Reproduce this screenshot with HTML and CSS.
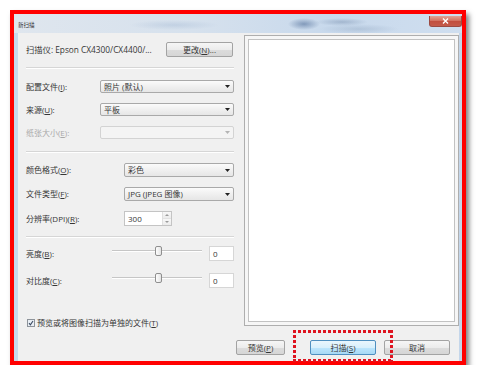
FILE: index.html
```html
<!DOCTYPE html>
<html lang="zh-CN">
<head>
<meta charset="utf-8">
<title>新扫描</title>
<link rel="stylesheet" href="styles.css">
</head>
<body>
<div class="frame">
  <div class="window">
    <div class="titlebar">
      <span class="title">新扫描</span>
      <div class="close">
        <svg width="7" height="6" viewBox="0 0 7 6"><path d="M1 0.5 L6 5.5 M6 0.5 L1 5.5" stroke="#fff" stroke-width="1.4" fill="none"/></svg>
      </div>
    </div>
    <div class="body">
      <div class="main">
        <div class="left">
          <div class="scanner-row">
            <span class="txt">扫描仪: Epson CX4300/CX4400/...</span>
            <div class="btn change">更改(<u>N</u>)...</div>
          </div>
          <div class="sep sep1"></div>
          <div class="grid group1">
            <span class="lbl">配置文件(<u>I</u>):</span>
            <div class="combo"><span>照片 (默认)</span><svg class="arr" width="5" height="3" viewBox="0 0 5 3"><path d="M0 0H5L2.5 3Z" fill="#222"/></svg></div>
            <span class="lbl">来源(<u>U</u>):</span>
            <div class="combo"><span>平板</span><svg class="arr" width="5" height="3" viewBox="0 0 5 3"><path d="M0 0H5L2.5 3Z" fill="#222"/></svg></div>
            <span class="lbl dis">纸张大小(<u>E</u>):</span>
            <div class="combo disabled"><span></span><svg class="arr" width="5" height="3" viewBox="0 0 5 3"><path d="M0 0H5L2.5 3Z" fill="#b4b4b4"/></svg></div>
          </div>
          <div class="sep sep2"></div>
          <div class="grid group2">
            <span class="lbl">颜色格式(<u>O</u>):</span>
            <div class="combo"><span>彩色</span><svg class="arr" width="5" height="3" viewBox="0 0 5 3"><path d="M0 0H5L2.5 3Z" fill="#222"/></svg></div>
            <span class="lbl">文件类型(<u>F</u>):</span>
            <div class="combo"><span>JPG (JPEG 图像)</span><svg class="arr" width="5" height="3" viewBox="0 0 5 3"><path d="M0 0H5L2.5 3Z" fill="#222"/></svg></div>
            <span class="lbl">分辨率(DPI)(<u>R</u>):</span>
            <div class="spin">
              <span class="spin-val">300</span>
              <div class="spin-btns">
                <div class="sb"><svg width="4" height="2" viewBox="0 0 4 2"><path d="M0 2H4L2 0Z" fill="#9a9a9a"/></svg></div>
                <div class="sb"><svg width="4" height="2" viewBox="0 0 4 2"><path d="M0 0H4L2 2Z" fill="#9a9a9a"/></svg></div>
              </div>
            </div>
          </div>
          <div class="sep sep3"></div>
          <div class="grid group3">
            <span class="lbl">亮度(<u>B</u>):</span>
            <div class="slider"><div class="track"></div><div class="thumb"></div></div>
            <div class="valbox">0</div>
            <span class="lbl">对比度(<u>C</u>):</span>
            <div class="slider"><div class="track"></div><div class="thumb"></div></div>
            <div class="valbox">0</div>
          </div>
          <div class="check-row">
            <svg class="cb" width="8" height="8" viewBox="0 0 8 8"><rect x="0.5" y="0.5" width="7" height="7" fill="#e9eef4" stroke="#8d939a"/><path d="M2 4.2 L3.4 5.8 L6 2" stroke="#3a4a62" stroke-width="1.1" fill="none"/></svg>
            <span class="txt">预览或将图像扫描为单独的文件(<u>T</u>)</span>
          </div>
        </div>
        <div class="preview"><div class="preview-inner"></div></div>
      </div>
      <div class="actions">
        <div class="btn b-preview">预览(<u>P</u>)</div>
        <div class="btn b-scan default">扫描(<u>S</u>)</div>
        <div class="btn b-cancel">取消</div>
      </div>
    </div>
  </div>
  <div class="focus-mark"></div>
</div>
</body>
</html>
```

FILE: styles.css
```css
* { box-sizing: border-box; }

body {
  margin: 0;
  padding: 10px 0 0 10px;
  background: #ffffff;
  font-family: "Open Sans", "Noto Sans CJK SC", sans-serif;
  color: #363636;
}

u { text-decoration: underline; text-underline-offset: 1px; text-decoration-thickness: 0.5px; }

.frame {
  position: relative;
  width: 456px;
  height: 355px;
  border: 4px solid #ff0000;
  box-shadow: 3px 4px 5px rgba(0, 0, 0, 0.5);
}

.window {
  display: flex;
  flex-direction: column;
  height: 100%;
  background: linear-gradient(90deg, #c6d8ec, #cddcee 50%, #c4d6ea);
}

.titlebar {
  height: 19px;
  display: flex;
  align-items: flex-start;
  background:
    radial-gradient(ellipse 16px 6px at 290px 10px, rgba(70, 100, 145, 0.55), rgba(70, 100, 145, 0)),
    radial-gradient(ellipse 26px 4px at 328px 8px, rgba(90, 115, 150, 0.35), rgba(90, 115, 150, 0)),
    radial-gradient(ellipse 40px 5px at 345px 15px, rgba(110, 135, 165, 0.25), rgba(110, 135, 165, 0)),
    radial-gradient(ellipse 45px 5px at 160px 11px, rgba(120, 150, 190, 0.22), rgba(120, 150, 190, 0)),
    linear-gradient(90deg, #dfe6ee, #d6e1ed 40%, #c8d9ec 70%, #cfdeef);
}

.title {
  font-size: 5.5px;
  line-height: 6px;
  margin: 8px 0 0 4px;
  color: #2a2a2a;
}

.close {
  margin-left: auto;
  margin-top: 2px;
  width: 33px;
  height: 11px;
  border: 1px solid #9c4a42;
  border-top: none;
  border-radius: 0 0 3px 3px;
  background: linear-gradient(#e3a295, #d27463 45%, #c24f3f 55%, #c45b4b);
  display: flex;
  align-items: center;
  justify-content: center;
}

.body {
  flex: 1;
  display: flex;
  flex-direction: column;
  background: #f0f0f0;
  margin: 0 3px 0 4px;
}

.main {
  height: 299px;
  display: flex;
}

.left {
  width: 222px;
  padding: 0 6px 0 8px;
  display: flex;
  flex-direction: column;
  font-size: 8px;
}

.txt, .lbl { font-size: 8px; line-height: 10px; white-space: nowrap; }
.scanner-row .txt { font-size: 8.3px; }
.lbl.dis { color: #a9a9a9; }

.scanner-row {
  margin-top: 9px;
  height: 15px;
  display: flex;
  align-items: center;
  justify-content: space-between;
}

.btn {
  height: 15px;
  border: 1px solid #a3a3a3;
  border-radius: 2px;
  background: linear-gradient(#f6f6f6, #ececec 50%, #dcdcdc 51%, #d6d6d6);
  font-size: 8px;
  line-height: 13px;
  text-align: center;
  color: #363636;
  white-space: nowrap;
}

.change { width: 67px; margin-right: 1px; }

.sep {
  height: 2px;
  border-top: 1px solid #d6d6d6;
  border-bottom: 1px solid #ffffff;
}
.sep1 { margin-top: 10px; }
.sep2 { margin-top: 12px; }
.sep3 { margin-top: 10px; }

.grid {
  display: grid;
  align-items: center;
}

.group1 {
  margin-top: 11px;
  grid-template-columns: 74px 1fr;
  grid-auto-rows: 13px;
  row-gap: 10px;
}

.group2 {
  margin-top: 10px;
  grid-template-columns: 98px 1fr;
  grid-template-rows: 14px 14px 15px;
  row-gap: 10px;
}

.group3 {
  margin-top: 8px;
  grid-template-columns: 86px 90px 1fr;
  grid-auto-rows: 15px;
  row-gap: 12px;
}

.combo {
  height: 100%;
  border: 1px solid #a9a9a9;
  border-radius: 2px;
  background: linear-gradient(#fbfbfb, #f0f0f0 50%, #e6e6e6);
  display: flex;
  align-items: center;
  justify-content: space-between;
  padding: 0 3px 0 3px;
  font-size: 8px;
  line-height: 10px;
  white-space: nowrap;
}

.combo.disabled {
  border-color: #d3d3d3;
  background: #f4f4f4;
}

.spin {
  width: 48px;
  height: 15px;
  display: flex;
  border: 1px solid #c4c4c4;
  background: #ffffff;
}

.spin-val {
  flex: 1;
  font-size: 8px;
  line-height: 13px;
  padding-left: 3px;
}

.spin-btns {
  width: 9px;
  display: flex;
  flex-direction: column;
  border-left: 1px solid #e0e0e0;
}

.sb {
  flex: 1;
  display: flex;
  align-items: center;
  justify-content: center;
  background: linear-gradient(#f7f7f7, #ececec);
}
.sb + .sb { border-top: 1px solid #e2e2e2; }

.slider {
  height: 11px;
  align-self: start;
  position: relative;
}

.track {
  margin-top: 4px;
  height: 2px;
  border-top: 1px solid #c6c6c6;
  border-bottom: 1px solid #ffffff;
}

.thumb {
  position: absolute;
  left: 43px;
  top: 0;
  width: 7px;
  height: 10px;
  border: 1px solid #8f8f8f;
  border-radius: 2px;
  background: linear-gradient(90deg, #fdfdfd, #e4e4e4);
}

.valbox {
  margin-left: 7px;
  height: 15px;
  border: 1px solid #d6d6d6;
  background: #ffffff;
  font-size: 8px;
  line-height: 13px;
  padding-left: 3px;
}

.check-row {
  margin-top: 30px;
  height: 9px;
  display: flex;
  align-items: center;
  gap: 2px;
  padding-left: 1px;
}

.preview {
  margin: 2px 0 6px 4px;
  width: 215px;
  border: 1px solid #aeaeae;
  padding: 3px;
  background: #f6f6f6;
}

.preview-inner {
  height: 100%;
  border: 1px solid #c2c2c2;
  background: #ffffff;
}

.actions {
  display: flex;
  justify-content: flex-end;
  padding: 8px 9px 0 0;
}

.b-preview { width: 49px; }
.b-scan { width: 66px; margin-left: 25px; }
.b-cancel { width: 66px; margin-left: 8px; }

.btn.default {
  border-color: #4f8fbf;
  background: linear-gradient(#eaf6fd, #d9f0fc 50%, #bee6fd 51%, #a7d9f5);
}

.focus-mark {
  position: absolute;
  left: 279px;
  top: 316px;
  width: 100px;
  height: 32px;
  background:
    repeating-linear-gradient(90deg, #de1420 0 3px, transparent 3px 5px) top / 100% 3px no-repeat,
    repeating-linear-gradient(90deg, #de1420 0 3px, transparent 3px 5px) bottom / 100% 3px no-repeat,
    repeating-linear-gradient(180deg, #de1420 0 3px, transparent 3px 5px) left / 3px 100% no-repeat,
    repeating-linear-gradient(180deg, #de1420 0 3px, transparent 3px 5px) right / 3px 100% no-repeat;
}
```
